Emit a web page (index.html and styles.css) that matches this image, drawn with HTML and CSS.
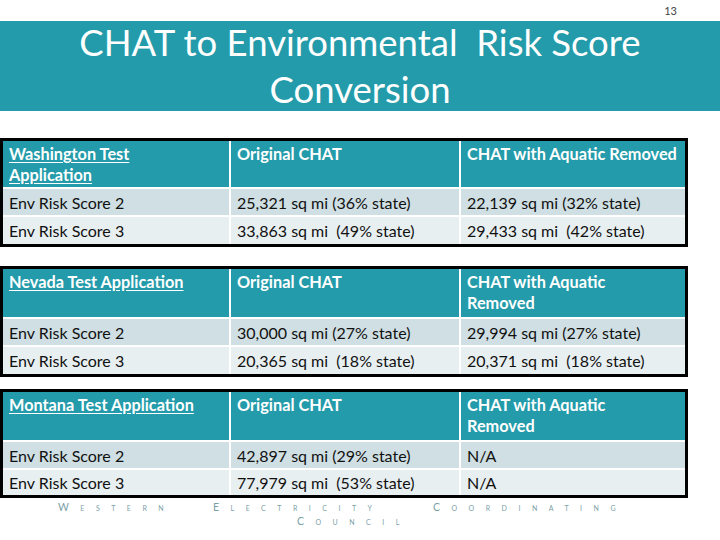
FILE: index.html
```html
<!DOCTYPE html>
<html>
<head>
<meta charset="utf-8">
<link rel="stylesheet" href="styles.css">
</head>
<body>
<div class="slide">
  <div class="page-num">13</div>
  <div class="banner">
    <h1 class="title">CHAT to Environmental&nbsp; Risk Score<br>Conversion</h1>
  </div>

  <div class="tbl tbl-wa">
    <div class="cell head"><span class="app">Washington Test Application</span></div>
    <div class="cell head">Original CHAT</div>
    <div class="cell head">CHAT with Aquatic Removed</div>
    <div class="cell r1">Env Risk Score 2</div>
    <div class="cell r1">25,321 sq mi (36% state)</div>
    <div class="cell r1">22,139 sq mi (32% state)</div>
    <div class="cell r2">Env Risk Score 3</div>
    <div class="cell r2">33,863 sq mi&nbsp; (49% state)</div>
    <div class="cell r2">29,433 sq mi&nbsp; (42% state)</div>
  </div>

  <div class="tbl tbl-nv">
    <div class="cell head"><span class="app">Nevada Test Application</span></div>
    <div class="cell head">Original CHAT</div>
    <div class="cell head">CHAT with Aquatic<br>Removed</div>
    <div class="cell r1">Env Risk Score 2</div>
    <div class="cell r1">30,000 sq mi (27% state)</div>
    <div class="cell r1">29,994 sq mi (27% state)</div>
    <div class="cell r2">Env Risk Score 3</div>
    <div class="cell r2">20,365 sq mi&nbsp; (18% state)</div>
    <div class="cell r2">20,371 sq mi&nbsp; (18% state)</div>
  </div>

  <div class="tbl tbl-mt">
    <div class="cell head"><span class="app">Montana Test Application</span></div>
    <div class="cell head">Original CHAT</div>
    <div class="cell head">CHAT with Aquatic<br>Removed</div>
    <div class="cell r1">Env Risk Score 2</div>
    <div class="cell r1">42,897 sq mi (29% state)</div>
    <div class="cell r1">N/A</div>
    <div class="cell r2">Env Risk Score 3</div>
    <div class="cell r2">77,979 sq mi&nbsp; (53% state)</div>
    <div class="cell r2">N/A</div>
  </div>

  <div class="footer">
    <div class="foot-line line1">
      <span class="word w-western">Western</span>
      <span class="word w-electricity">Electricity</span>
      <span class="word">Coordinating</span>
    </div>
    <div class="foot-line line2">
      <span class="word">Council</span>
    </div>
  </div>
</div>
</body>
</html>
```
FILE: styles.css
```css
* { box-sizing: border-box; }
html, body { margin: 0; padding: 0; background: #fff; }
.slide {
  width: 720px;
  height: 540px;
  overflow: hidden;
  position: relative;
  font-family: Lato, "Open Sans", sans-serif;
  color: #111;
}
.page-num {
  height: 21px;
  padding: 5px 43px 0 0;
  text-align: right;
  font-size: 11px;
  line-height: 12px;
  color: #444;
}
.banner {
  height: 90px;
  background: #239baa;
  display: flex;
  align-items: center;
  justify-content: center;
  overflow: visible;
}
.title {
  margin: 0;
  font-weight: 400;
  font-size: 36.5px;
  line-height: 47px;
  color: #fff;
  text-align: center;
  white-space: nowrap;
}
.tbl {
  display: grid;
  grid-template-columns: 226px 228px 224px;
  column-gap: 2px;
  row-gap: 2px;
  width: 688px;
  background: #fff;
  border: 3px solid #000;
}
.tbl-wa { margin-top: 27px; grid-template-rows: 46px 26px 27px; }
.tbl-nv { margin-top: 19px; grid-template-rows: 48px 26px 27px; }
.tbl-mt { margin-top: 12px; grid-template-rows: 48px 26px 25px; }
.cell {
  font-size: 16px;
  padding: 0 5px 0 6px;
  display: flex;
  align-items: center;
  white-space: nowrap;
}
.head {
  background: #239baa;
  color: #fff;
  font-weight: 700;
  font-size: 16.3px;
  align-items: flex-start;
  padding-top: 2px;
  line-height: 21px;
  white-space: normal;
}
.app {
  text-decoration: underline;
  text-underline-offset: 2px;
}
.tbl-wa .head:first-child .app { display: block; width: 150px; }
.r1 { background: #cfdfe3; }
.r2 { background: #e8eff1; }
.footer {
  margin-top: 2px;
  color: #7b9fa7;
  font-size: 10.5px;
  font-variant: small-caps;
  letter-spacing: 11.5px;
  line-height: 14px;
}
.foot-line { display: flex; }
.line1 { padding-left: 58px; }
.line2 { padding-left: 297px; }
.w-western { width: 155px; }
.w-electricity { width: 220px; }
```
